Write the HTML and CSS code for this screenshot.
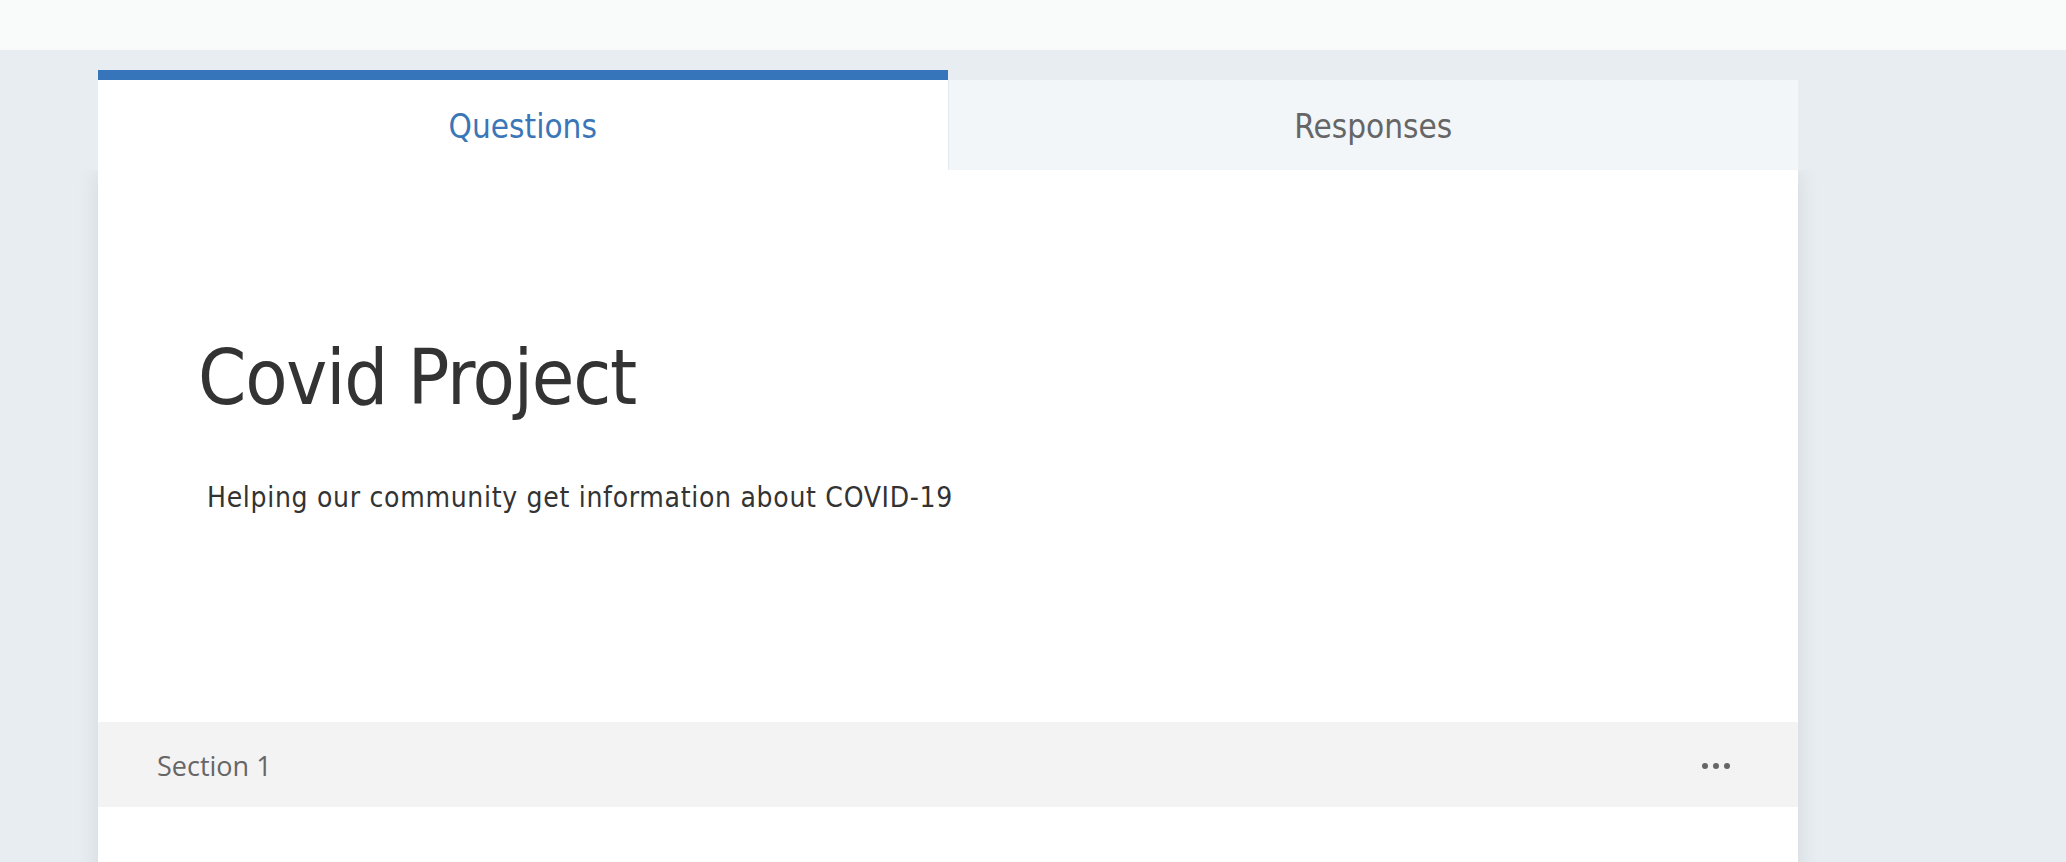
FILE: index.html
```html
<!DOCTYPE html>
<html lang="en">
<head>
<meta charset="utf-8">
<title>Covid Project</title>
<link rel="stylesheet" href="styles.css">
</head>
<body>
<div class="topbar"></div>
<main class="page">
  <div class="form">
    <div class="tabs">
      <div class="tab tab-active">Questions</div>
      <div class="tab tab-inactive">Responses</div>
    </div>
    <div class="card">
      <div class="header">
        <h1 class="title">Covid Project</h1>
        <p class="subtitle">Helping our community get information about COVID-19</p>
      </div>
      <div class="section-bar">
        <span class="section-label">Section 1</span>
        <span class="more" aria-label="More options"><i class="dot"></i><i class="dot"></i><i class="dot"></i></span>
      </div>
      <div class="section-body"></div>
    </div>
  </div>
</main>
</body>
</html>
```
FILE: styles.css
```css
html, body {
  margin: 0;
  padding: 0;
  background: #e8edf1;
  overflow: hidden;
}
body {
  font-family: "DejaVu Sans Condensed", "DejaVu Sans", sans-serif;
  color: #333333;
}
.topbar {
  height: 50px;
  background: #f9fafa;
}
.page {
  padding: 20px 0 0 98px;
}
.form {
  width: 1700px;
}
.tabs {
  display: flex;
  height: 100px;
}
.tab {
  flex: 1 1 0;
  display: flex;
  align-items: center;
  justify-content: center;
  font-size: 33px;
  box-sizing: border-box;
  padding-top: 2px;
}
.tab-active {
  background: #ffffff;
  border-top: 10px solid #3775ba;
  color: #3a76b8;
}
.tab-inactive {
  margin-top: 10px;
  background: #f2f6f9;
  color: #666666;
  border-left: 1px solid #e4e9ed;
}
.card {
  background: #ffffff;
  box-shadow: 0 0 22px rgba(0, 0, 0, 0.09);
  clip-path: inset(0 -40px -40px -40px);
}
.header {
  padding: 169px 0 210px 100px;
}
.title {
  margin: 0;
  font-weight: normal;
  font-size: 77px;
  line-height: 77px;
  letter-spacing: -1.2px;
  color: #333333;
}
.subtitle {
  margin: 68px 0 0 9px;
  font-size: 28px;
  line-height: 28px;
  letter-spacing: 0.7px;
  color: #333333;
}
.section-bar {
  display: flex;
  align-items: center;
  justify-content: space-between;
  height: 85px;
  padding: 0 68px 0 59px;
  background: #f3f3f3;
}
.section-label {
  font-family: "Open Sans", "Noto Sans", sans-serif;
  font-size: 27px;
  color: #666666;
  padding-top: 1px;
}
.more {
  display: flex;
  gap: 5px;
  padding-top: 3px;
}
.dot {
  display: block;
  width: 6px;
  height: 6px;
  border-radius: 50%;
  background: #666666;
}
.section-body {
  height: 200px;
}
```
